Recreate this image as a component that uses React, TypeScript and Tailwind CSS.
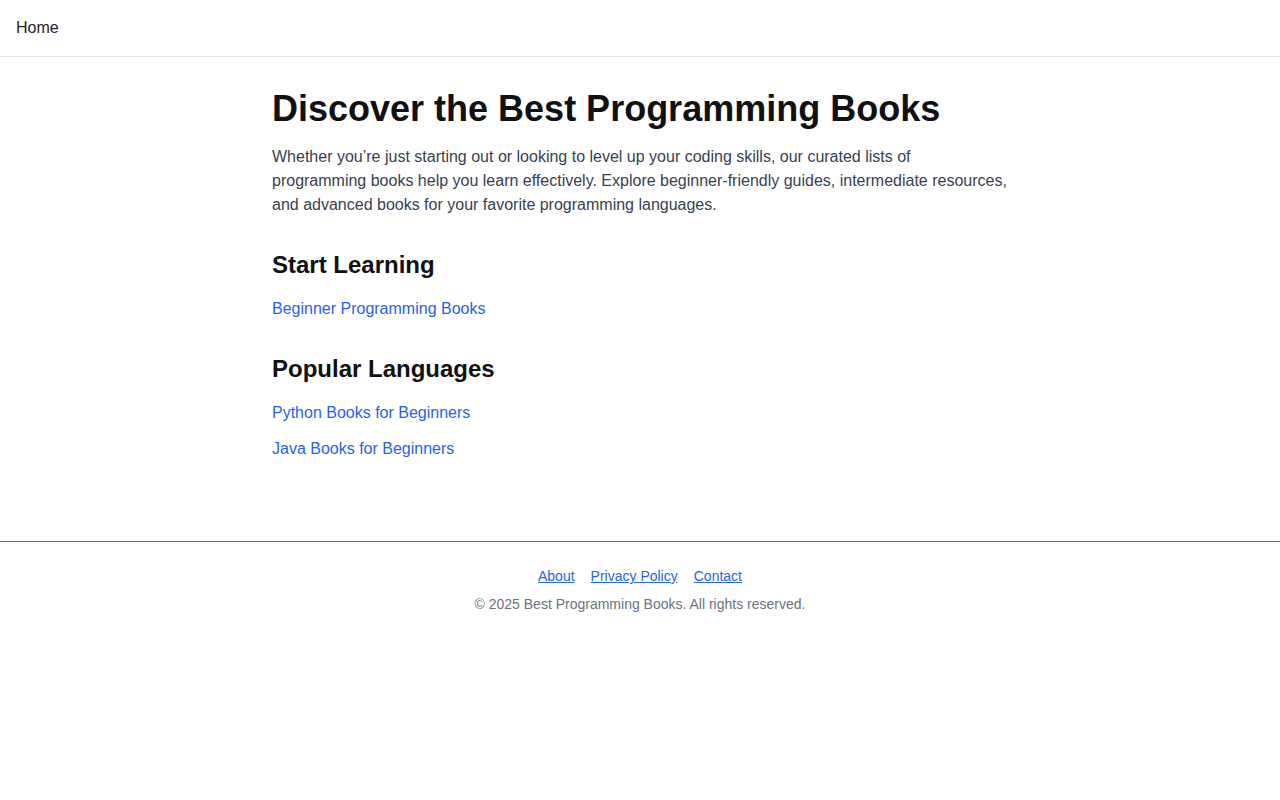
import React from "react";

// Landing page for the book lists: header nav, intro, link sections, footer.

const sections = [
  { title: "Start Learning", links: ["Beginner Programming Books"] },
  { title: "Popular Languages", links: ["Python Books for Beginners", "Java Books for Beginners"] },
];

export default function App() {
  return (
    <div className="min-h-screen bg-white text-[#111] font-['Liberation_Sans',Arial,sans-serif]">
      <header className="h-[57px] border-b border-gray-200 flex items-center px-4">
        <a href="#" className="text-base text-[#222]">Home</a>
      </header>

      <main className="max-w-3xl mx-auto px-4 py-8">
        <h1 className="text-4xl font-bold text-[#111] mb-4">Discover the Best Programming Books</h1>
        <p className="text-base leading-6 text-[#374151]">
          Whether you’re just starting out or looking to level up your coding skills, our curated lists of
          programming books help you learn effectively. Explore beginner-friendly guides, intermediate resources,
          and advanced books for your favorite programming languages.
        </p>

        {sections.map((s) => (
          <section key={s.title} className="mt-8">
            <h2 className="text-2xl font-semibold text-[#111] mb-4">{s.title}</h2>
            <ul className="space-y-3">
              {s.links.map((l) => (
                <li key={l}>
                  <a href="#" className="text-[#2563eb]">{l}</a>
                </li>
              ))}
            </ul>
          </section>
        ))}
      </main>

      <footer className="mt-12 border-t border-[#6b6b6b] pt-6 text-center text-sm">
        <nav className="flex justify-center gap-4">
          <a href="#" className="text-[#2563eb] underline">About</a>
          <a href="#" className="text-[#2563eb] underline">Privacy Policy</a>
          <a href="#" className="text-[#2563eb] underline">Contact</a>
        </nav>
        <p className="mt-2 text-[#6b7280]">© 2025 Best Programming Books. All rights reserved.</p>
      </footer>
    </div>
  );
}
